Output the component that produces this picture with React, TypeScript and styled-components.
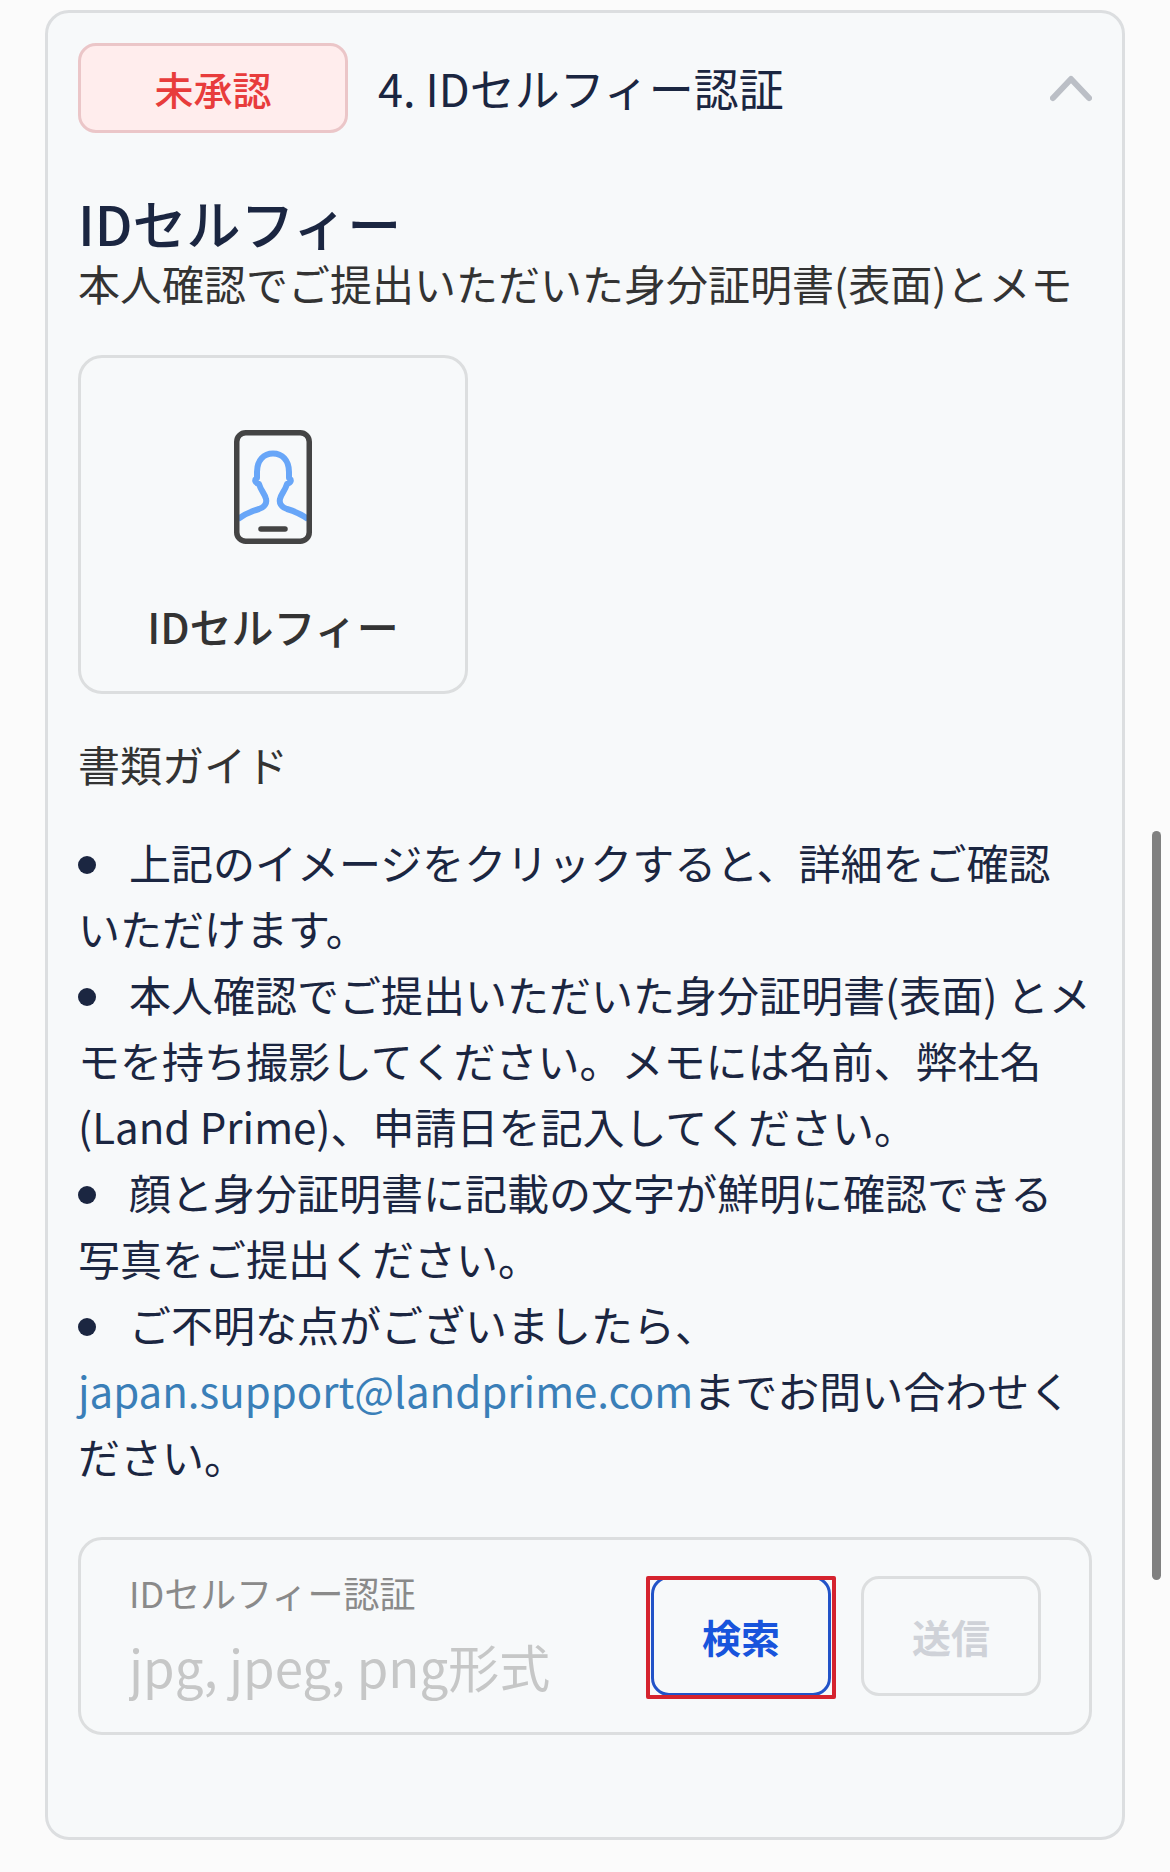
import React, { useState } from "react";
import styled, { createGlobalStyle } from "styled-components";

const GlobalStyle = createGlobalStyle`
  *, *::before, *::after { box-sizing: border-box; }
  body {
    margin: 0;
    background: #fbfbfb;
    color: #1b2641;
    font-family: "Noto Sans CJK JP", "Noto Sans", sans-serif;
    font-size: 42px;
    line-height: 60px;
  }
  button, input { font-family: inherit; }
`;

const Page = styled.main`
  min-height: 100vh;
  padding: 10px 45px 32px;
`;

const Card = styled.section`
  padding: 30px;
  border: 3px solid #dcdee0;
  border-radius: 24px;
  background: #f7f9fa;
`;

const Header = styled.header`
  display: flex;
  align-items: center;
  gap: 30px;
`;

const Badge = styled.span`
  display: flex;
  align-items: center;
  justify-content: center;
  width: 270px;
  height: 90px;
  border: 3px solid #ebc6c8;
  border-radius: 18px;
  background: #ffeded;
  color: #e83c3c;
  font-size: 39px;
  font-weight: 500;
`;

const Title = styled.h2`
  flex: 1;
  margin: 0;
  font-size: 45px;
  font-weight: 400;
`;

const ToggleButton = styled.button<{ $open: boolean }>`
  display: flex;
  padding: 0;
  border: 0;
  background: none;
  color: #bbbfc6;
  cursor: pointer;
  transform: ${(p) => (p.$open ? "none" : "rotate(180deg)")};
`;

const Body = styled.div`
  padding: 60px 0 72px;
`;

const Heading = styled.h3`
  margin: 0;
  font-size: 54px;
  font-weight: 500;
`;

const Lead = styled.p`
  margin: 0;
  color: #333333;
`;

const SampleButton = styled.button`
  display: flex;
  flex-direction: column;
  align-items: center;
  gap: 52px;
  width: 390px;
  margin: 42px 0 40px;
  padding: 72px 0 35px;
  border: 3px solid #dcdedf;
  border-radius: 24px;
  background: none;
  color: #333333;
  font-size: 42px;
  font-weight: 500;
  line-height: 60px;
  cursor: pointer;
`;

const GuideList = styled.ul`
  margin: 35px 0 48px;
  padding: 0;
  list-style: none;
  line-height: 66px;
`;

const GuideItem = styled.li`
  &::before {
    content: "";
    display: inline-block;
    width: 18px;
    height: 18px;
    margin-right: 33px;
    border-radius: 50%;
    background: currentColor;
    vertical-align: 6px;
  }
`;

const MailLink = styled.a`
  color: #3a7fb8;
  text-decoration: none;
`;

const Upload = styled.form`
  display: flex;
  align-items: flex-start;
  gap: 30px;
  padding: 36px 48px 24px;
  border: 3px solid #dcdedf;
  border-radius: 24px;
`;

const Field = styled.div`
  display: flex;
  flex: 1;
  flex-direction: column;
  gap: 16px;
  min-width: 0;
`;

const FieldLabel = styled.label`
  color: #8a8a8a;
  font-size: 36px;
  line-height: 32px;
`;

const FileInput = styled.input`
  width: 100%;
  height: 84px;
  padding: 0;
  border: 0;
  outline: 0;
  background: none;
  font-size: 51px;

  &::placeholder {
    color: #c6c7c7;
    opacity: 1;
  }
`;

const ActionButton = styled.button<{ $primary?: boolean }>`
  width: 180px;
  height: 120px;
  padding: 0;
  border: 3px solid ${(p) => (p.$primary ? "#2253c8" : "#dcdedf")};
  border-radius: 18px;
  background: none;
  color: ${(p) => (p.$primary ? "#1854dc" : "#cfd2d8")};
  font-size: 39px;
  font-weight: 700;
  cursor: ${(p) => (p.$primary ? "pointer" : "default")};
`;

const Highlight = styled.div`
  position: relative;
  display: flex;

  &::after {
    content: "";
    position: absolute;
    inset: 0 -5px -3px;
    border: 4px solid #d5232e;
    border-radius: 2px;
    pointer-events: none;
  }
`;

const ScrollThumb = styled.div`
  position: fixed;
  top: 44.4%;
  right: 9px;
  width: 9px;
  height: 40%;
  border-radius: 5px;
  background: #808080;
`;

const ChevronIcon = () => (
  <svg width="42" height="30" viewBox="0 0 42 30" fill="none" aria-hidden="true">
    <path d="M3 25 21 6l18 19" stroke="currentColor" strokeWidth="6" strokeLinecap="round" strokeLinejoin="round" />
  </svg>
);

const SelfieIcon = () => (
  <svg width="78" height="114" viewBox="0 0 78 114" fill="none" aria-hidden="true">
    <path
      d="M4 89C11 84 18 81 25 79C31 77 33 73 32 69C31 64 27 61 25 54C21 53 20 50 23 48V42C23 30 30 23.5 39 23.5C48 23.5 55 30 55 42V48C58 50 57 53 53 54C51 61 47 64 46 69C45 73 47 77 53 79C60 81 67 84 74 89"
      stroke="#68a6f8"
      strokeWidth="6"
      strokeLinejoin="round"
    />
    <rect x="2.75" y="2.75" width="72.5" height="108.5" rx="9" stroke="#444444" strokeWidth="5.5" />
    <path d="M27 99h24" stroke="#444444" strokeWidth="5.5" strokeLinecap="round" />
  </svg>
);

export default function App() {
  const [open, setOpen] = useState(true);

  return (
    <>
      <GlobalStyle />
      <Page lang="ja">
        <Card>
          <Header>
            <Badge>未承認</Badge>
            <Title>4. IDセルフィー認証</Title>
            <ToggleButton type="button" $open={open} aria-expanded={open} aria-label="開閉" onClick={() => setOpen(!open)}>
              <ChevronIcon />
            </ToggleButton>
          </Header>
          {open && (
            <Body>
              <Heading>IDセルフィー</Heading>
              <Lead>本人確認でご提出いただいた身分証明書(表面)とメモ</Lead>
              <SampleButton type="button">
                <SelfieIcon />
                IDセルフィー
              </SampleButton>
              <Lead>書類ガイド</Lead>
              <GuideList>
                <GuideItem>上記のイメージをクリックすると、詳細をご確認いただけます。</GuideItem>
                <GuideItem>
                  本人確認でご提出いただいた身分証明書(表面) とメモを持ち撮影してください。メモには名前、弊社名(Land Prime)、申請日を記入してください。
                </GuideItem>
                <GuideItem>顔と身分証明書に記載の文字が鮮明に確認できる写真をご提出ください。</GuideItem>
                <GuideItem>
                  ご不明な点がございましたら、
                  <MailLink href="mailto:japan.support@landprime.com">japan.support@landprime.com</MailLink>
                  までお問い合わせください。
                </GuideItem>
              </GuideList>
              <Upload>
                <Field>
                  <FieldLabel htmlFor="selfie-file">IDセルフィー認証</FieldLabel>
                  <FileInput id="selfie-file" type="text" placeholder="jpg, jpeg, png形式" readOnly />
                </Field>
                <Highlight>
                  <ActionButton type="button" $primary>
                    検索
                  </ActionButton>
                </Highlight>
                <ActionButton type="submit" disabled>
                  送信
                </ActionButton>
              </Upload>
            </Body>
          )}
        </Card>
      </Page>
      <ScrollThumb />
    </>
  );
}
